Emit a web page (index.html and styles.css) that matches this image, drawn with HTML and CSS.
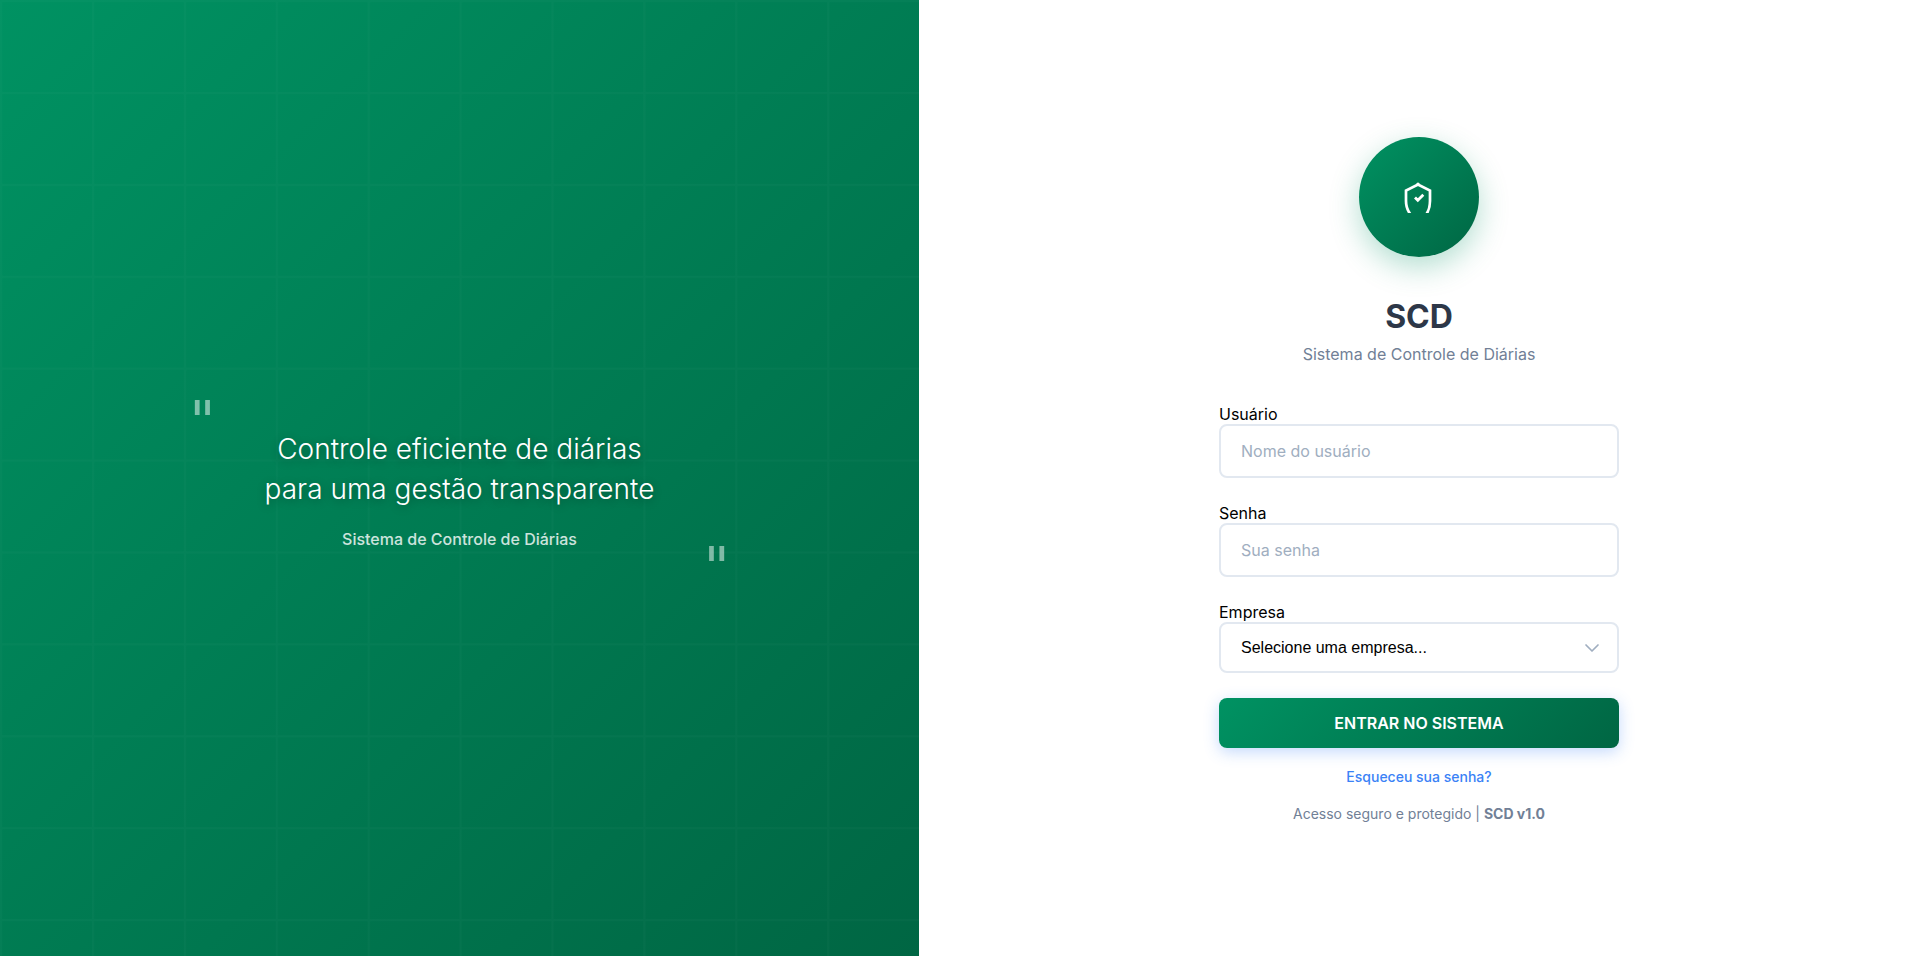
FILE: index.html
```html
<!DOCTYPE html>
<html lang="pt-BR">
<head>
    <meta charset="UTF-8">
    <meta name="viewport" content="width=device-width, initial-scale=1.0">
    <title>SCD - Sistema de Controle de Diárias</title>
    <link rel="stylesheet" href="styles.css">
</head>
<body>
    <div class="login-container">
        <div class="left-panel">
            <svg class="grid-lines" viewBox="0 0 100 200" preserveAspectRatio="xMinYMin slice" aria-hidden="true">
                <defs>
                    <pattern id="grid" width="10" height="10" patternUnits="userSpaceOnUse">
                        <path d="M10 0H0V10" fill="none" stroke="#fff" stroke-width="0.5"/>
                    </pattern>
                </defs>
                <rect width="100" height="200" fill="url(#grid)"/>
            </svg>
            <div class="quote">
                <p class="quote-text">Controle eficiente de diárias<br>para uma gestão transparente</p>
                <p class="quote-author">Sistema de Controle de Diárias</p>
            </div>
        </div>

        <div class="right-panel">
            <div class="login-box">
                <div class="logo">
                    <svg width="40" height="40" viewBox="0 0 40 40" fill="none" stroke="#fff" aria-hidden="true">
                        <defs>
                            <clipPath id="shield"><rect width="40" height="36"/></clipPath>
                        </defs>
                        <g clip-path="url(#shield)">
                            <path d="M13 39C9 35 7 30.500 7 24V13.500L19 7.500L31 13.500V24C31 30.500 29.500 35 26 39" stroke-width="2.700"/>
                            <circle cx="19" cy="7" r="1.600" fill="#fff" stroke="none"/>
                            <path d="M16 20.500L18.800 23.300L24.300 17.800" stroke-width="2.800"/>
                        </g>
                    </svg>
                </div>
                <h1>SCD</h1>
                <p class="subtitle">Sistema de Controle de Diárias</p>

                <form>
                    <div class="form-group">
                        <label for="usuario">Usuário</label>
                        <input type="text" id="usuario" name="usuario" placeholder="Nome do usuário">
                    </div>
                    <div class="form-group">
                        <label for="senha">Senha</label>
                        <input type="password" id="senha" name="senha" placeholder="Sua senha">
                    </div>
                    <div class="form-group">
                        <label for="empresa">Empresa</label>
                        <div class="select-box">
                            <select id="empresa" name="empresa">
                                <option value="">Selecione uma empresa...</option>
                            </select>
                            <svg class="arrow" width="16" height="16" viewBox="0 0 16 16" fill="none" stroke="#a0aec0" aria-hidden="true">
                                <path d="M2 5L8 11L14 5" stroke-width="1.700" stroke-linecap="round" stroke-linejoin="round"/>
                            </svg>
                        </div>
                    </div>
                    <button type="submit" class="btn-login">ENTRAR NO SISTEMA</button>
                </form>

                <a href="#" class="forgot">Esqueceu sua senha?</a>
                <p class="footer-text">Acesso seguro e protegido | <strong>SCD v1.0</strong></p>
            </div>
        </div>
    </div>
</body>
</html>
```
FILE: styles.css
```css
* {
    margin: 0;
    padding: 0;
    box-sizing: border-box;
}
body {
    font-family: Inter, "Liberation Sans", sans-serif;
    font-size: 16px;
    line-height: 20px;
    background: #fff;
}
.login-container {
    display: flex;
    min-height: 100vh;
}
.left-panel {
    flex: 1;
    display: flex;
    align-items: center;
    justify-content: center;
    position: relative;
    overflow: hidden;
    background: linear-gradient(135deg, #009262 0%, #006643 100%);
}
.grid-lines {
    position: absolute;
    top: 0;
    left: 0;
    width: 100%;
    height: 100%;
    opacity: 0.02;
}
.quote {
    position: relative;
    width: 500px;
    padding-top: 22px;
    text-align: center;
    color: #fff;
}
.quote::before,
.quote::after {
    content: '"';
    position: absolute;
    font-family: "DejaVu Sans", sans-serif;
    font-size: 56px;
    line-height: 64px;
    opacity: 0.5;
}
.quote::before {
    top: -18px;
    left: -20px;
}
.quote::after {
    right: -20px;
    bottom: -50px;
}
.quote-text {
    margin-bottom: 20px;
    font-size: 28px;
    font-weight: 300;
    line-height: 40px;
    text-shadow: 0 2px 10px rgba(0, 0, 0, 0.3);
}
.quote-author {
    font-weight: 500;
    opacity: 0.8;
}
.right-panel {
    flex: 0 1 1000px;
    display: flex;
    align-items: center;
    justify-content: center;
    padding: 24px 20px 20px;
}
.login-box {
    width: 100%;
    max-width: 400px;
    text-align: center;
}
.logo {
    display: flex;
    align-items: center;
    justify-content: center;
    width: 120px;
    height: 120px;
    margin: 0 auto 40px;
    border-radius: 50%;
    background: linear-gradient(135deg, #009262 0%, #006643 100%);
    box-shadow: 0 10px 30px rgba(0, 146, 98, 0.3);
}
h1 {
    margin-bottom: 7px;
    font-size: 32px;
    font-weight: 700;
    line-height: 40px;
    color: #2d3748;
}
.subtitle {
    margin-bottom: 40px;
    color: #718096;
}
.form-group {
    margin-bottom: 25px;
    text-align: left;
}
label {
    display: block;
    color: #000;
}
input,
select {
    display: block;
    width: 100%;
    height: 54px;
    padding: 0 20px;
    border: 2px solid #e2e8f0;
    border-radius: 8px;
    background: #fff;
    font-family: inherit;
    font-size: 16px;
    color: #000;
}
input::placeholder {
    color: #a0aec0;
}
.select-box {
    position: relative;
}
select {
    height: 51px;
    font-family: "Liberation Sans", Arial, sans-serif;
    appearance: none;
}
.arrow {
    position: absolute;
    top: 18px;
    right: 19px;
    pointer-events: none;
}
.btn-login {
    display: block;
    width: 100%;
    height: 50px;
    border: none;
    border-radius: 8px;
    background: linear-gradient(135deg, #009262 0%, #006643 100%);
    box-shadow: 0 4px 15px rgba(59, 130, 246, 0.3);
    font-family: inherit;
    font-size: 16px;
    font-weight: 600;
    color: #fff;
    cursor: pointer;
}
.forgot {
    display: block;
    margin-top: 19px;
    font-size: 14px;
    font-weight: 500;
    color: #3b82f6;
    text-decoration: none;
}
.footer-text {
    margin-top: 17px;
    font-size: 14px;
    color: #718096;
}
```
